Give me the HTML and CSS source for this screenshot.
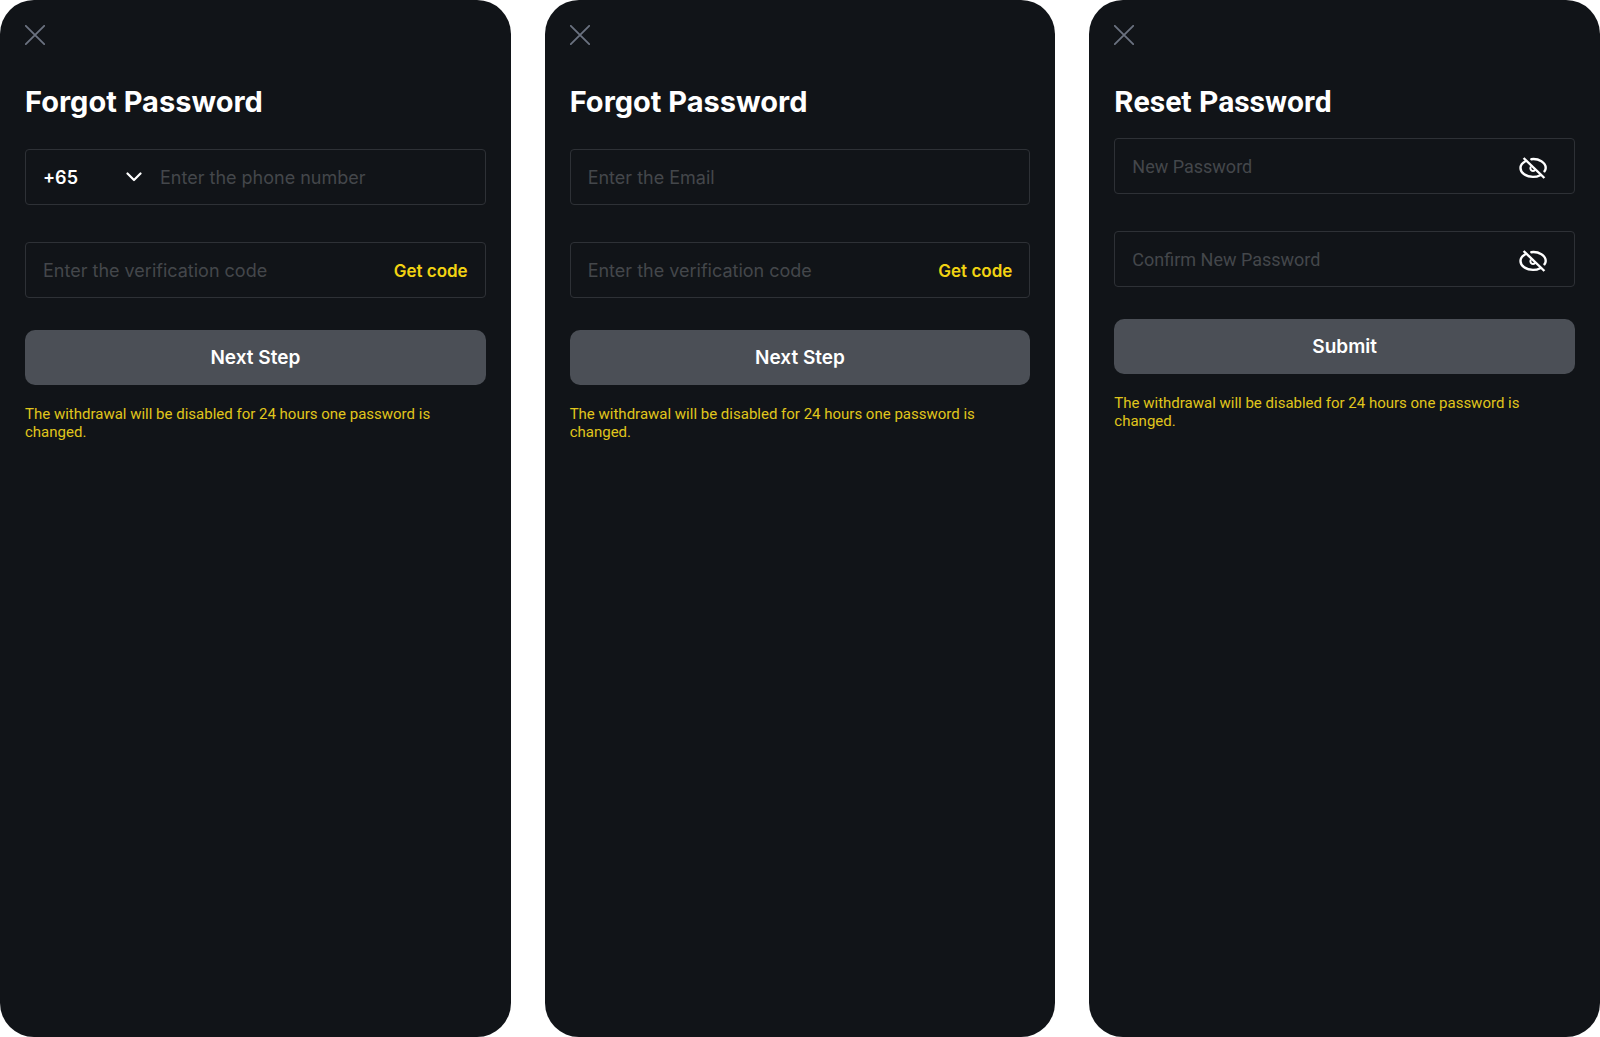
FILE: index.html
```html
<!DOCTYPE html>
<html lang="en">
<head>
<meta charset="utf-8">
<meta name="viewport" content="width=device-width, initial-scale=1">
<title>Password recovery</title>
<link rel="stylesheet" href="styles.css">
</head>
<body>
<svg class="sprite" aria-hidden="true">
  <symbol id="close" viewBox="0 0 20 20"><path d="M.8.8l18.400 18.400M19.200.8L.8 19.200" fill="none" stroke="currentColor" stroke-width="1.800" stroke-linecap="round"/></symbol>
  <symbol id="eye-off" viewBox="0 0 28 22">
    <g fill="none" stroke="currentColor" stroke-width="2.400" stroke-linecap="round" stroke-linejoin="round">
      <path d="M4.600 1L25.400 21" stroke-linecap="butt"/>
      <path d="M12.300 2.200C20 1.300 26.700 5.800 26.700 11c0 1.100-.4 2.200-1.200 3.300"/>
      <path d="M6.800 4C3.500 5.700 1.500 8.300 1.500 11c0 5 5.600 8.900 12.500 8.900 2.700 0 5.200-.6 7.200-1.700"/>
      <path d="M11.600 10.200c-.7 1.800.4 3.700 2.300 3.700.9 0 1.600-.4 2.100-.9" stroke-width="2"/>
    </g>
  </symbol>
</svg>
<main class="screens">
  <section class="screen">
    <button class="close" type="button" aria-label="Close"><svg><use href="#close"/></svg></button>
    <h1 class="title">Forgot Password</h1>
    <form class="form">
      <div class="field">
        <div class="country">
          <select class="code" aria-label="Country code"><option>+65</option></select>
          <svg class="chevron" viewBox="0 0 16 10" aria-hidden="true"><path d="M1.500 1.500L8 8l6.500-6.500" fill="none" stroke="currentColor" stroke-width="2.200" stroke-linecap="round" stroke-linejoin="round"/></svg>
        </div>
        <input class="input" type="tel" aria-label="Phone number" placeholder="Enter the phone number">
      </div>
      <div class="field">
        <input class="input" type="text" aria-label="Verification code" placeholder="Enter the verification code">
        <button class="get-code" type="button">Get code</button>
      </div>
      <button class="submit" type="button">Next Step</button>
    </form>
    <p class="notice">The withdrawal will be disabled for 24 hours one password is changed.</p>
  </section>

  <section class="screen">
    <button class="close" type="button" aria-label="Close"><svg><use href="#close"/></svg></button>
    <h1 class="title">Forgot Password</h1>
    <form class="form">
      <div class="field">
        <input class="input" type="email" aria-label="Email" placeholder="Enter the Email">
      </div>
      <div class="field">
        <input class="input" type="text" aria-label="Verification code" placeholder="Enter the verification code">
        <button class="get-code" type="button">Get code</button>
      </div>
      <button class="submit" type="button">Next Step</button>
    </form>
    <p class="notice">The withdrawal will be disabled for 24 hours one password is changed.</p>
  </section>

  <section class="screen reset">
    <button class="close" type="button" aria-label="Close"><svg><use href="#close"/></svg></button>
    <h1 class="title">Reset Password</h1>
    <form class="form">
      <div class="field">
        <input class="input" type="password" aria-label="New password" placeholder="New Password">
        <button class="reveal" type="button" aria-label="Show new password"><svg><use href="#eye-off"/></svg></button>
      </div>
      <div class="field">
        <input class="input" type="password" aria-label="Confirm new password" placeholder="Confirm New Password">
        <button class="reveal" type="button" aria-label="Show confirmed password"><svg><use href="#eye-off"/></svg></button>
      </div>
      <button class="submit" type="button">Submit</button>
    </form>
    <p class="notice">The withdrawal will be disabled for 24 hours one password is changed.</p>
  </section>
</main>
</body>
</html>
```
FILE: styles.css
```css
* { box-sizing: border-box; }

body {
  margin: 0;
  background: #fff;
  color: #fff;
  font-family: Inter, "Liberation Sans", sans-serif;
}

button, input, select {
  margin: 0;
  padding: 0;
  border: 0;
  background: none;
  color: inherit;
  font: inherit;
}

button { cursor: pointer; }

.sprite { display: none; }

.screens {
  display: grid;
  grid-template-columns: repeat(3, 1fr);
  gap: 34px;
  min-height: 100vh;
}

.screen {
  padding: 25px;
  border-radius: 34px;
  background: #111418;
}

.close {
  display: block;
  width: 20px;
  height: 20px;
  color: #6b7280;
}

.close svg { display: block; width: 20px; height: 20px; }

.title {
  margin: 39px 0 29px;
  font-size: 29px;
  line-height: 36px;
  font-weight: 700;
}

.form { display: flex; flex-direction: column; }

.field {
  display: flex;
  align-items: center;
  height: 56px;
  margin-bottom: 37px;
  padding: 0 17px;
  border: 1px solid #2e3136;
  border-radius: 4px;
}

.field:nth-of-type(2) { margin-bottom: 32px; }

.input {
  flex: 1;
  min-width: 0;
  height: 100%;
  font-size: 18px;
  outline: none;
}

.input::placeholder { color: #44474b; opacity: 1; }

.country {
  display: grid;
  grid-template-columns: 1fr 16px;
  align-items: center;
  width: 99px;
  margin-right: 18px;
}

.code {
  grid-area: 1 / 1 / 2 / 3;
  appearance: none;
  font-size: 18px;
  font-weight: 600;
}

.chevron {
  grid-area: 1 / 2;
  width: 16px;
  height: 10px;
  pointer-events: none;
}

.get-code {
  padding-top: 2px;
  color: #f2d312;
  font-size: 17px;
  font-weight: 600;
}

.reveal {
  height: 26px;
  margin-right: 10px;
  padding-top: 4px;
}

.reveal svg { display: block; width: 28px; height: 22px; }

.submit {
  height: 55px;
  border-radius: 10px;
  background: #4b4f56;
  font-size: 19px;
  font-weight: 600;
}

.notice {
  margin: 20px 0 0;
  color: #e0c61c;
  font-family: Roboto, "Liberation Sans", sans-serif;
  font-size: 15px;
  line-height: 18px;
}

.reset .title,
.reset .input { font-family: Roboto, "Liberation Sans", sans-serif; }

.reset .title { margin-bottom: 18px; font-size: 30px; }
```
